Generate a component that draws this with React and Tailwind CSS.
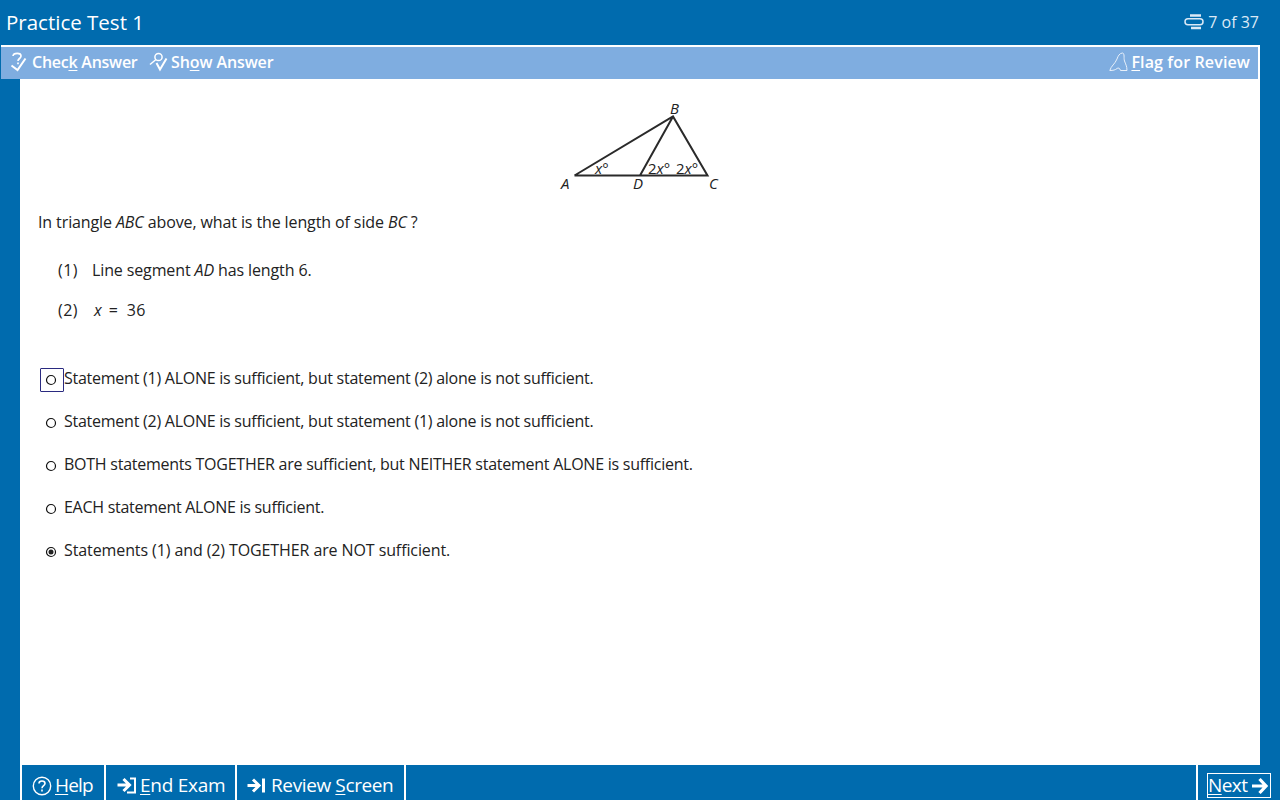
import React from "react";

function Radio({ checked }) {
  return (
    <svg width="12" height="12" viewBox="0 0 12 12" className="shrink-0 mr-[2px]">
      <circle cx="6" cy="6" r="4.5" fill="white" stroke="#111" strokeWidth="1.2" />
      {checked && <circle cx="6" cy="6" r="2.5" fill="#222" />}
    </svg>
  );
}

function Choice({ text, focused, checked, track }) {
  return (
    <div className="h-[43px] flex items-start pl-[20px]">
      <div className={"w-[24px] h-[24px] flex items-center justify-center mt-[2px] shrink-0 rounded-[1px] border " + (focused ? "border-[#2a2a80]" : "border-transparent")}>
        <Radio checked={checked} />
      </div>
      <span className={"leading-[24px] text-[16px] " + track}>{text}</span>
    </div>
  );
}

function CheckIcon() {
  return (
    <svg width="17" height="20" viewBox="0 0 17 20" fill="none" stroke="white" strokeWidth="1.7" className="shrink-0">
      <path d="M3 4C3.5 0.5 11 0.5 11 4C11 6.5 8 6.5 8 9" />
      <path d="M8 10.5v1.8" />
      <path d="M1.5 13.5L7.5 18L15.5 6.5" strokeWidth="2" />
    </svg>
  );
}
function ShowIcon() {
  return (
    <svg width="19" height="20" viewBox="0 0 19 20" fill="none" stroke="white" strokeWidth="1.5" className="shrink-0">
      <circle cx="9.5" cy="5" r="3.6" />
      <path d="M7 7.5L1 12.5" />
      <path d="M7.5 11L11 17.5L17.5 6.5" strokeWidth="2" />
    </svg>
  );
}
function FlagIcon() {
  return (
    <svg width="19" height="20" viewBox="0 0 19 20" fill="none" stroke="#e8f0fa" strokeWidth="1" className="shrink-0">
      <path d="M0.8 18.5C2 14 6 12 8 7C9 4 10.5 1.2 13.5 1C16 1.5 14.5 6 15.5 9C16.5 12 18 14 18 18.5L11.5 18.5C11 16 9 15.5 8 16.5C6.5 18 4 18.5 0.8 18.5Z" />
    </svg>
  );
}
function ClipIcon() {
  return (
    <svg width="20" height="16" viewBox="0 0 20 16" fill="none" stroke="#dbe9f6" className="shrink-0">
      <path d="M6 1.5h11M7 14h10" strokeWidth="2.4" />
      <rect x="1" y="4.8" width="18" height="6" rx="3" strokeWidth="1.5" />
    </svg>
  );
}
function HelpIcon() {
  return (
    <svg width="20" height="20" viewBox="0 0 20 20" fill="none" stroke="white" strokeWidth="1.4" className="shrink-0">
      <circle cx="10" cy="10" r="8.7" />
      <path d="M7 7.5C7 4.2 13 4.2 13 7.5C13 9.6 10 9.6 10 12.2" strokeWidth="1.6" />
      <path d="M10 13.5v2" strokeWidth="1.6" />
    </svg>
  );
}
function EndIcon() {
  return (
    <svg width="20" height="18" viewBox="0 0 20 18" fill="none" stroke="white" strokeWidth="3" className="shrink-0">
      <path d="M0.5 8h11M6.5 2L12.5 8L6.5 14" />
      <path d="M13 1.5h5v14h-8" strokeWidth="2" />
    </svg>
  );
}
function ReviewIcon() {
  return (
    <svg width="19" height="18" viewBox="0 0 19 18" fill="none" stroke="white" strokeWidth="3" className="shrink-0">
      <path d="M0.5 8.5h11M6 2.5L12 8.5L6 14.5" />
      <path d="M16.5 1.5v14" strokeWidth="3" />
    </svg>
  );
}
function NextIcon() {
  return (
    <svg width="16" height="18" viewBox="0 0 16 18" fill="none" stroke="white" strokeWidth="3.2" className="shrink-0">
      <path d="M0 9h13M7.5 2L14 9L7.5 16" />
    </svg>
  );
}

function Diagram() {
  const t = { fontFamily: "'Open Sans', sans-serif", fontSize: 15, fill: "#222" };
  return (
    <svg width="180" height="105" viewBox="550 95 180 105" className="block">
      <path d="M574.5 175.5H707.5L673 116.5L574.5 175.5M673 116.5L640 175.5" fill="none" stroke="#2a2a2a" strokeWidth="2" />
      <text x="670" y="114" fontStyle="italic" {...t}>B</text>
      <text x="561" y="189" fontStyle="italic" {...t}>A</text>
      <text x="633" y="189" fontStyle="italic" {...t}>D</text>
      <text x="709" y="189" fontStyle="italic" {...t}>C</text>
      <text x="595" y="174" {...t}><tspan fontStyle="italic">x</tspan>°</text>
      <text x="648" y="174" {...t}>2<tspan fontStyle="italic">x</tspan>°</text>
      <text x="676" y="174" {...t}>2<tspan fontStyle="italic">x</tspan>°</text>
    </svg>
  );
}

export default function App() {
  return (
    <div className="w-[1280px] h-[800px] flex flex-col bg-[#006bae] overflow-hidden text-[#222] font-['Open_Sans',sans-serif]">
      <header className="h-[45px] shrink-0 flex items-center justify-between pl-[6px] pr-[21px] text-white pb-[1px]">
        <div className="text-[20.5px]">Practice Test 1</div>
        <div className="flex items-center gap-[4px] text-[16px] text-[#dbe9f6]">
          <ClipIcon />
          <span>7 of 37</span>
        </div>
      </header>

      <div className="pl-[1px] pr-[20px] shrink-0">
        <div className="h-[34px] border-t-2 border-r-2 border-white bg-[#7fade0] flex items-center justify-between pl-[9px] pr-[8px] pb-[2px] text-white text-[16px] font-semibold">
          <div className="flex items-center">
            <span className="flex items-center gap-[5px]"><CheckIcon /><span className="w-[105px] whitespace-nowrap tracking-[-0.25px]">Chec<u className="underline-offset-2">k</u> Answer</span></span>
            <span className="flex items-center gap-[3px] ml-[12px]"><ShowIcon /><span className="whitespace-nowrap tracking-[-0.1px]">Sh<u className="underline-offset-2">o</u>w Answer</span></span>
          </div>
          <span className="flex items-center gap-[3px]"><FlagIcon /><span className="whitespace-nowrap tracking-[0.13px]"><u className="underline-offset-2">F</u>lag for Review</span></span>
        </div>
      </div>

      <div className="flex-1 flex pl-[20px] pr-[20px] min-h-0">
        <main className="flex-1 bg-white min-h-0 min-w-0 text-[16px]">
          <div className="flex justify-center pt-[16px] h-[121px]">
            <Diagram />
          </div>
          <div className="pl-[18px] leading-[24px] mt-[10px] tracking-[-0.11px]">
            In triangle <i>ABC</i> above, what is the length of side <i>BC</i> ?
          </div>
          <div className="pl-[38px] mt-[24px] leading-[24px] flex">
            <span className="w-[34px] tracking-[0.5px]">(1)</span><span className="tracking-[-0.12px]">Line segment <i>AD</i> has length 6.</span>
          </div>
          <div className="pl-[38px] mt-[16px] leading-[24px] flex">
            <span className="w-[36px] tracking-[0.5px]">(2)</span>
            <span className="flex gap-[7px]"><i>x</i><span>=</span><span className="ml-[2px] tracking-[0.2px]">36</span></span>
          </div>
          <div className="mt-[44px]">
            <Choice focused track="tracking-[-0.25px]" text="Statement (1) ALONE is sufficient, but statement (2) alone is not sufficient." />
            <Choice track="tracking-[-0.25px]" text="Statement (2) ALONE is sufficient, but statement (1) alone is not sufficient." />
            <Choice track="tracking-[-0.25px]" text="BOTH statements TOGETHER are sufficient, but NEITHER statement ALONE is sufficient." />
            <Choice track="tracking-[-0.28px]" text="EACH statement ALONE is sufficient." />
            <Choice checked track="tracking-[-0.1px]" text="Statements (1) and (2) TOGETHER are NOT sufficient." />
          </div>
        </main>
      </div>

      <footer className="h-[35px] shrink-0 flex text-white text-[19px] pl-[20px]">
        <div className="w-[86px] border-l-2 border-r-2 border-white flex items-center pl-[10px] gap-[3px] pt-[6px]">
          <HelpIcon /><span className="tracking-[-0.8px]"><u className="underline-offset-2">H</u>elp</span>
        </div>
        <div className="w-[131px] border-r-2 border-white flex items-center pl-[11px] gap-[3px] pt-[6px]">
          <EndIcon /><span className="tracking-[-0.25px] whitespace-nowrap"><u className="underline-offset-2">E</u>nd Exam</span>
        </div>
        <div className="w-[169px] border-r-2 border-white flex items-center pl-[10px] gap-[5px] pt-[6px]">
          <ReviewIcon /><span className="tracking-[-0.38px] whitespace-nowrap">Review <u className="underline-offset-2">S</u>creen</span>
        </div>
        <div className="flex-1" />
        <div className="w-[84px] border-l-2 border-white flex items-end pl-[9px] pb-[2px]">
          <div className="h-[25px] w-[64px] border-[1.5px] border-white flex items-center justify-between pr-[2px]">
            <span className="tracking-[-0.6px]"><u className="underline-offset-2">N</u>ext</span><NextIcon />
          </div>
        </div>
      </footer>
    </div>
  );
}
